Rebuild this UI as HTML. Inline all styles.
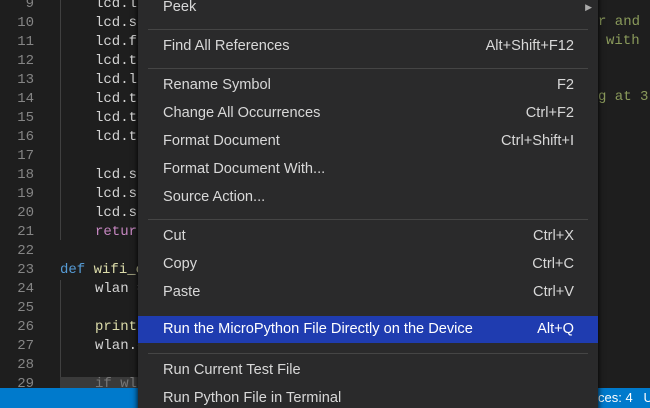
<!DOCTYPE html>
<html><head><style>
html,body{margin:0;width:650px;height:408px;overflow:hidden;}
body{background:#1e1e1e;position:relative;font-family:"Liberation Mono",monospace;}
.ln{position:absolute;left:0;width:34px;text-align:right;color:#858585;font-size:14px;}
.c{position:absolute;font-size:14px;color:#d4d4d4;white-space:pre;}
.g{color:#8a9a5b}
#menu{position:absolute;left:138px;top:-6px;width:460px;height:430px;background:#2a2a2b;box-shadow:0 0 6px #000;font-family:"Liberation Sans",sans-serif;font-size:14.6px;color:#d8d8d8;}
.it{position:absolute;left:0;right:0;height:27px;line-height:27px;white-space:nowrap}
.it span{position:absolute;left:25px}
.it b{position:absolute;right:24px;font-weight:normal}
.sep{position:absolute;left:10px;right:10px;height:1px;background:#454545}
#status{position:absolute;left:0;top:388px;width:650px;height:20px;background:#007acc;overflow:hidden}
</style></head><body>
<div class="ln" style="top:-4px">9</div><div class="ln" style="top:15px">10</div><div class="ln" style="top:34px">11</div><div class="ln" style="top:53px">12</div><div class="ln" style="top:72px">13</div><div class="ln" style="top:91px">14</div><div class="ln" style="top:110px">15</div><div class="ln" style="top:129px">16</div><div class="ln" style="top:148px">17</div><div class="ln" style="top:167px">18</div><div class="ln" style="top:186px">19</div><div class="ln" style="top:205px">20</div><div class="ln" style="top:224px">21</div><div class="ln" style="top:243px">22</div><div class="ln" style="top:262px">23</div><div class="ln" style="top:281px">24</div><div class="ln" style="top:300px">25</div><div class="ln" style="top:319px">26</div><div class="ln" style="top:338px">27</div><div class="ln" style="top:357px">28</div><div class="ln" style="top:376px">29</div>
<div style="position:absolute;left:60px;top:0;width:1px;height:240px;background:#404040"></div>
<div style="position:absolute;left:60px;top:280px;width:1px;height:110px;background:#404040"></div>
<div style="position:absolute;left:60px;top:377px;width:80px;height:12px;background:#3a3a3a"></div>
<div class="c" style="left:95px;top:-4px">lcd.li</div>
<div class="c" style="left:95px;top:15px">lcd.se</div>
<div class="c" style="left:95px;top:34px">lcd.fi</div>
<div class="c" style="left:95px;top:53px">lcd.te</div>
<div class="c" style="left:95px;top:72px">lcd.li</div>
<div class="c" style="left:95px;top:91px">lcd.te</div>
<div class="c" style="left:95px;top:110px">lcd.te</div>
<div class="c" style="left:95px;top:129px">lcd.te</div>
<div class="c" style="left:95px;top:167px">lcd.sh</div>
<div class="c" style="left:95px;top:186px">lcd.sh</div>
<div class="c" style="left:95px;top:205px">lcd.sh</div>
<div class="c" style="left:95px;top:224px;color:#c586c0">return</div>
<div class="c" style="left:60px;top:262px"><span style="color:#569cd6">def</span> <span style="color:#dcdcaa">wifi_c</span></div>
<div class="c" style="left:95px;top:281px;color:#d4d4d4">wlan =</div>
<div class="c" style="left:95px;top:319px;color:#dcdcaa">print</div>
<div class="c" style="left:95px;top:338px">wlan.c</div>
<div class="c" style="left:95px;top:376px;color:#777">if wla</div>
<div class="c g" style="left:598px;top:14px">r and</div>
<div class="c g" style="left:606px;top:33px">with</div>
<div class="c g" style="left:598px;top:89px">g at 3</div>
<div id="status"><span style="position:absolute;left:598px;top:2px;font-family:'Liberation Sans',sans-serif;font-size:13px;color:#fff;white-space:nowrap">ces: 4&nbsp;&nbsp;&nbsp;U</span></div>
<div id="menu">
<div class="it" style="top:0px"><span>Peek</span><b style="right:6px;font-size:9px;color:#aaa">▶</b></div>
<div class="sep" style="top:35px"></div>
<div class="it" style="top:39px"><span>Find All References</span><b>Alt+Shift+F12</b></div>
<div class="sep" style="top:74px"></div>
<div class="it" style="top:78px"><span>Rename Symbol</span><b>F2</b></div>
<div class="it" style="top:106px"><span>Change All Occurrences</span><b>Ctrl+F2</b></div>
<div class="it" style="top:134px"><span>Format Document</span><b>Ctrl+Shift+I</b></div>
<div class="it" style="top:162px"><span>Format Document With...</span></div>
<div class="it" style="top:190px"><span>Source Action...</span></div>
<div class="sep" style="top:225px"></div>
<div class="it" style="top:229px"><span>Cut</span><b>Ctrl+X</b></div>
<div class="it" style="top:257px"><span>Copy</span><b>Ctrl+C</b></div>
<div class="it" style="top:285px"><span>Paste</span><b>Ctrl+V</b></div>
<div class="it" style="top:322px;background:#1f3cb0;color:#fff"><span>Run the MicroPython File Directly on the Device</span><b>Alt+Q</b></div>
<div class="sep" style="top:359px"></div>
<div class="it" style="top:363px"><span>Run Current Test File</span></div>
<div class="it" style="top:391px"><span>Run Python File in Terminal</span></div>
</div>
</body></html>
